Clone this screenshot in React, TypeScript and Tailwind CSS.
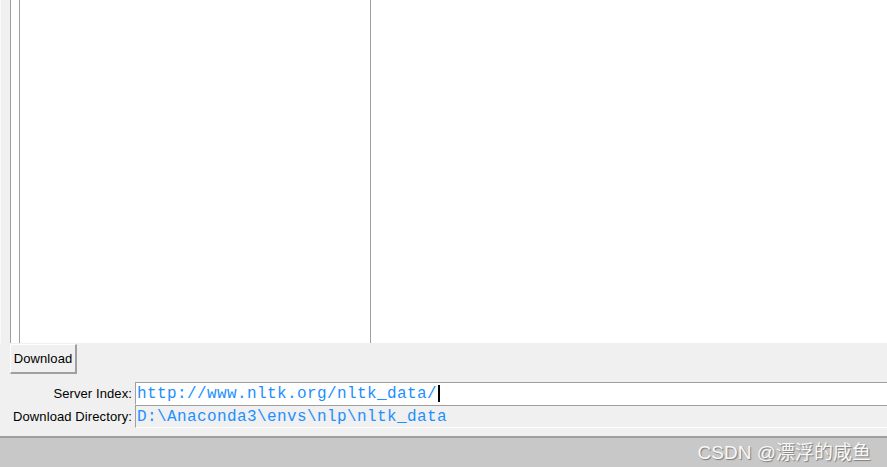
export default function App() {
  const label = "font-['Liberation_Sans',Arial,sans-serif] text-[13px] tracking-[0.1px] text-black";
  const mono = "font-['Liberation_Mono','Courier_New',monospace] text-[16px] tracking-[0.4px] text-[#1e8fff] leading-none";

  return (
    <div className="flex h-[467px] w-[887px] flex-col overflow-hidden bg-[#f0f0f0]">
      <div className="flex h-[436px] flex-col">
        {/* tree + detail panes */}
        <div className="flex h-[343px]">
          <div className="w-[10px] border-l border-[#fafafa]" />
          <div className="flex w-[361px] border-l border-[#a0a0a0] bg-white">
            <div className="w-[8px]" />
            <div className="flex-1 border-l border-r border-[#a0a0a0]" />
          </div>
          <div className="flex-1 bg-white" />
        </div>

        {/* download button */}
        <div className="flex pl-[10px] pt-[1px]">
          <button className={`${label} h-[30px] w-[67px] border-t border-l border-b-2 border-r-2 border-t-white border-l-white border-b-[#a0a0a0] border-r-[#a0a0a0] bg-[#f0f0f0] text-center`}>
            Download
          </button>
        </div>

        {/* entries */}
        <div className="mt-[8px] flex flex-col">
          <div className="flex h-[23px] items-center">
            <div className={`${label} w-[135px] pr-[3px] text-right`}>Server Index:</div>
            <div className="flex h-[23px] flex-1 items-center border-t border-l border-b border-[#a0a0a0] border-b-white bg-white pl-[1px]">
              <span className={mono}>http://www.nltk.org/nltk_data/</span>
              <span className="ml-[1px] h-[17px] w-[2px] bg-black" />
            </div>
          </div>
          <div className="flex h-[23px] items-center">
            <div className={`${label} w-[135px] pr-[3px] text-right`}>Download Directory:</div>
            <div className="flex h-[23px] flex-1 items-center border-t border-l border-b border-[#a0a0a0] border-b-white bg-[#f0f0f0] pl-[1px]">
              <span className={mono}>D:\Anaconda3\envs\nlp\nltk_data</span>
            </div>
          </div>
        </div>
      </div>

      {/* bottom bar */}
      <div className="flex flex-1 items-center justify-end border-t-2 border-[#a0a0a0] bg-[#c8c8c8] pr-[16px]">
        <span className="font-['Liberation_Sans','Noto_Sans_CJK_SC',sans-serif] text-[19px] leading-none text-[#f8f8f8] [text-shadow:1px_1px_1px_#7a7a7a]">
          CSDN @漂浮的咸鱼
        </span>
      </div>
    </div>
  );
}
